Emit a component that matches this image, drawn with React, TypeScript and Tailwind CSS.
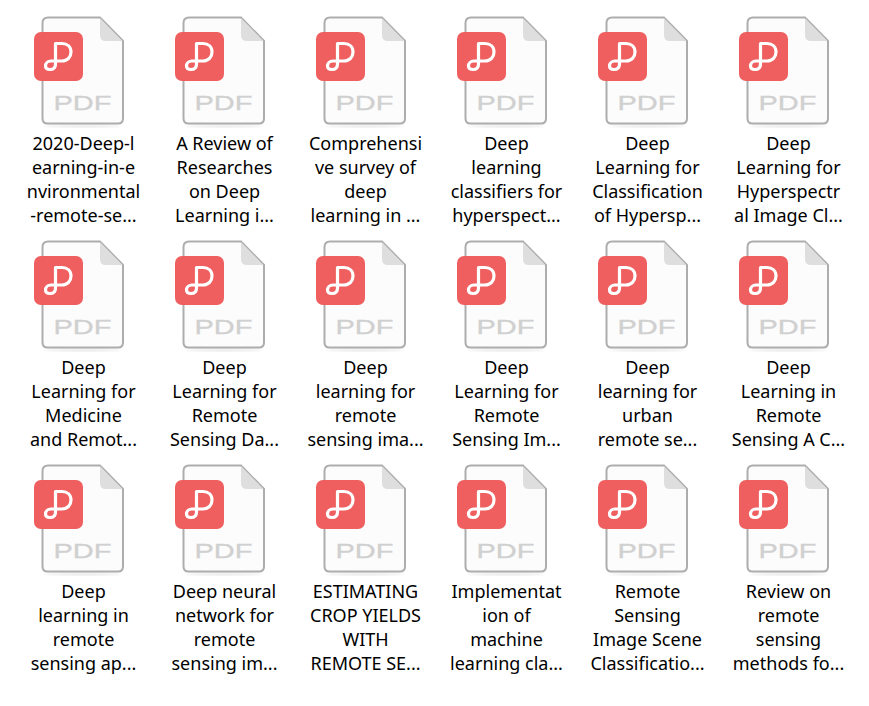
const files = [
  ["2020-Deep-l", "earning-in-e", "nvironmental", "-remote-se..."],
  ["A Review of", "Researches", "on Deep", "Learning i..."],
  ["Comprehensi", "ve survey of", "deep", "learning in ..."],
  ["Deep", "learning", "classifiers for", "hyperspect..."],
  ["Deep", "Learning for", "Classification", "of Hypersp..."],
  ["Deep", "Learning for", "Hyperspectr", "al Image Cl..."],
  ["Deep", "Learning for", "Medicine", "and Remot..."],
  ["Deep", "Learning for", "Remote", "Sensing Da..."],
  ["Deep", "learning for", "remote", "sensing ima..."],
  ["Deep", "Learning for", "Remote", "Sensing Im..."],
  ["Deep", "learning for", "urban", "remote se..."],
  ["Deep", "Learning in", "Remote", "Sensing A C..."],
  ["Deep", "learning in", "remote", "sensing ap..."],
  ["Deep neural", "network for", "remote", "sensing im..."],
  ["ESTIMATING", "CROP YIELDS", "WITH", "REMOTE SE..."],
  ["Implementat", "ion of", "machine", "learning cla..."],
  ["Remote", "Sensing", "Image Scene", "Classificatio..."],
  ["Review on", "remote", "sensing", "methods fo..."],
];

function PdfIcon() {
  return (
    <svg width="101" height="112" viewBox="-1 0 101 112" className="block shrink-0">
      <ellipse cx="49" cy="109.5" rx="38" ry="3" fill="#000" opacity="0.07" style={{ filter: "blur(2px)" }} />
      <path
        d="M14 1.5H66L89 25V102.5Q89 107.5 84 107.5H13.5Q8.5 107.5 8.5 102.5V7Q8.5 1.5 14 1.5Z"
        fill="#fcfcfc"
        stroke="#adadad"
        strokeWidth="2"
      />
      <path d="M66 2L88.5 25H72Q66 25 66 19Z" fill="#dedede" />
      <rect x="0" y="16" width="49" height="49" rx="7" fill="#ef5f5f" />
      <path
        d="M21.5 27.5H28C33.5 27.5 37 31 37 36S33.5 45 28 45H17C13.5 45 11.5 47.5 11.5 50C11.5 52.5 13.5 53.5 16 53.5C19.5 53.5 21.5 51.5 21.5 48V27.5Z"
        fill="none"
        stroke="#fff"
        strokeWidth="3.2"
        strokeLinecap="round"
        strokeLinejoin="round"
      />
      <text
        x="19.5"
        y="94"
        textLength="58"
        lengthAdjust="spacingAndGlyphs"
        fontFamily="'Liberation Sans', sans-serif"
        fontSize="21"
        fill="#d0d0d0"
        stroke="#d0d0d0"
        strokeWidth="0.3"
      >
        PDF
      </text>
    </svg>
  );
}

export default function App() {
  return (
    <div className="min-h-[706px] bg-white pl-[13px] font-['Noto_Sans','Noto_Sans_CJK_SC',sans-serif] text-[18px] leading-[24px] text-black">
      <div className="grid w-[846px] grid-cols-6">
        {files.map((lines, i) => (
          <div key={i} className="flex flex-col items-center pt-4 pb-[0px]">
            <PdfIcon />
            <div className="mt-[3px] h-[93px] text-center whitespace-nowrap">
              {lines.map((line, j) => (
                <div key={j}>{line}</div>
              ))}
            </div>
          </div>
        ))}
      </div>
    </div>
  );
}
